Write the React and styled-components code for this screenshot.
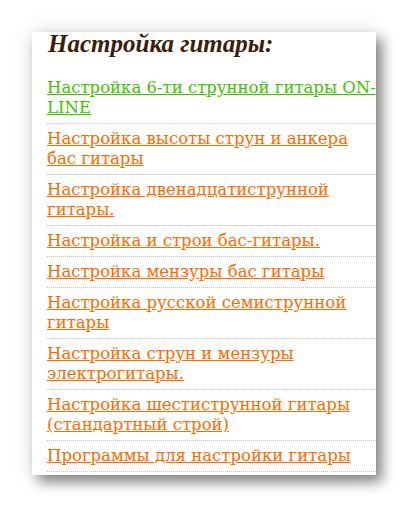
import React from "react";
import styled, { createGlobalStyle } from "styled-components";

const Global = createGlobalStyle`
  html, body {
    margin: 0;
    padding: 0;
    background: #fff;
  }
  body {
    width: 408px;
    height: 508px;
    overflow: hidden;
  }
`;

const Page = styled.div`
  padding: 32px;
`;

const Card = styled.div`
  width: 344px;
  height: 443px;
  box-sizing: border-box;
  padding: 0 0 0 15px;
  background: #fff;
  overflow: hidden;
  box-shadow: 6px 7px 12px rgba(0, 0, 0, 0.45), 0 0 22px rgba(0, 0, 0, 0.12);
`;

const Title = styled.h2`
  margin: 0;
  padding: 0 0 0 1px;
  height: 41px;
  font-family: "Liberation Serif", serif;
  font-style: italic;
  font-weight: bold;
  font-size: 25px;
  line-height: 24px;
  color: #3b1d0b;
`;

const List = styled.ul`
  list-style: none;
  margin: 0;
  padding: 0;
  width: 331px;
`;

const Item = styled.li`
  padding: 5px 0;
  font-family: "DejaVu Serif", serif;
  font-size: 16.5px;
  line-height: 20px;
  border-bottom: 1px dotted #c4c4c4;
`;

const Link = styled.a`
  color: ${p => (p.$active ? "#3fc300" : "#ff6a00")};
  text-decoration: underline;
`;

const links = [
  ["Настройка 6-ти струнной гитары ON-LINE", true],
  ["Настройка высоты струн и анкера бас гитары"],
  ["Настройка двенадцатиструнной гитары."],
  ["Настройка и строи бас-гитары."],
  ["Настройка мензуры бас гитары"],
  ["Настройка русской семиструнной гитары"],
  ["Настройка струн и мензуры электрогитары."],
  ["Настройка шестиструнной гитары (стандартный строй)"],
  ["Программы для настройки гитары"]
];

const App = () => (
  <Page>
    <Global />
    <Card>
      <Title>Настройка гитары:</Title>
      <List>
        {links.map(([text, active], i) => (
          <Item key={i}>
            <Link href="#" $active={active}>
              {text}
            </Link>
          </Item>
        ))}
      </List>
    </Card>
  </Page>
);

export default App;
